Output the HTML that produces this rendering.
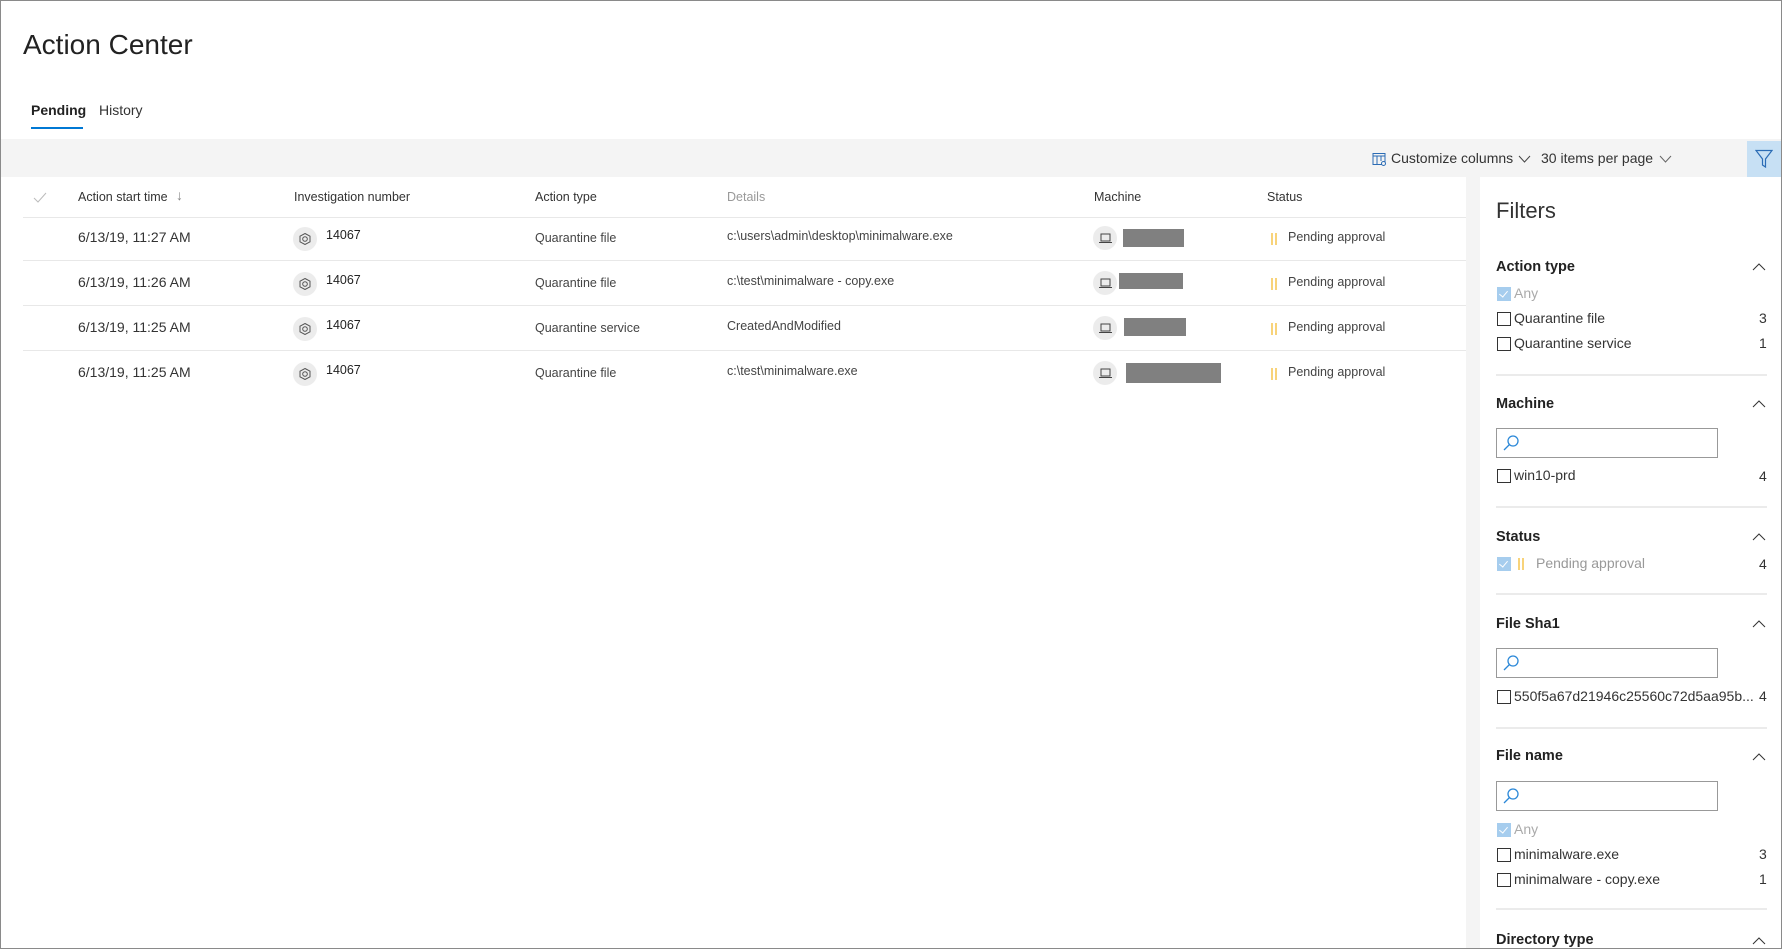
<!DOCTYPE html>
<html><head><meta charset="utf-8"><style>
*{box-sizing:border-box;margin:0;padding:0}
body{width:1782px;height:949px;overflow:hidden;background:#fff;font-family:"Segoe UI","Liberation Sans",sans-serif;color:#333;position:relative}
.frame{position:absolute;left:0;top:0;width:1782px;height:949px;border:1px solid #8a8a8a;z-index:10;pointer-events:none}
.a{position:absolute;white-space:nowrap}
.hd{font-size:12.5px;color:#333;top:190px}
.row{position:absolute;left:23px;width:1443px;height:1px;background:#e8e8e8}
.cell{font-size:12.5px;color:#444}
.date{font-size:14px;color:#333}
.ic{position:absolute;width:24px;height:24px;border-radius:50%;background:#ececec}
.red{position:absolute;background:#808080}
.bars{position:absolute;width:6px;height:12px;border-left:2px solid #f8d37a;border-right:2px solid #f8d37a}
.fh{font-size:14.5px;font-weight:bold;color:#222}
.fl{font-size:14px;color:#333}
.cb{position:absolute;width:14px;height:14px;border:1px solid #333;background:#fff}
.cbc{position:absolute;width:14px;height:14px;background:#a6cdee}
.cbc:after{content:"";position:absolute;left:4px;top:2px;width:4px;height:7px;border-right:1px solid #fff;border-bottom:1px solid #fff;transform:rotate(40deg)}
.cnt{font-size:14px;color:#333}
.div{position:absolute;left:1496px;width:271px;height:2px;background:#ebebeb}
.sb{position:absolute;left:1496px;width:222px;height:30px;border:1px solid #999;background:#fff}
.chev{position:absolute;left:1752px;width:14px;height:10px}
</style></head><body>
<div class="frame"></div>
<div class="a" style="left:23px;top:29px;font-size:28px;color:#222">Action Center</div>
<div class="a" style="left:31px;top:102px;font-size:14px;font-weight:bold;color:#222">Pending</div>
<div class="a" style="left:99px;top:102px;font-size:14px;color:#333">History</div>
<div style="position:absolute;left:31px;top:127px;width:52px;height:2px;background:#0078d4"></div>

<div style="position:absolute;left:1px;top:139px;width:1780px;height:38px;background:#f4f4f4"></div>
<svg style="position:absolute;left:1372px;top:152px" width="15" height="15" viewBox="0 0 15 15" fill="none" stroke="#2b6cb5" stroke-width="1"><rect x="1" y="1.5" width="12" height="11"/><line x1="1" y1="4" x2="13" y2="4"/><line x1="5" y1="4" x2="5" y2="12.5"/><line x1="9" y1="4" x2="9" y2="9"/><circle cx="11.5" cy="11.5" r="2" fill="#f4f4f4"/></svg>
<div class="a" style="left:1391px;top:150px;font-size:14px;color:#333">Customize columns</div>
<svg style="position:absolute;left:1518px;top:155px" width="13" height="8"><polyline points="1,1 6.5,7 12,1" fill="none" stroke="#444"/></svg>
<div class="a" style="left:1541px;top:150px;font-size:14px;color:#333">30 items per page</div>
<svg style="position:absolute;left:1659px;top:155px" width="13" height="8"><polyline points="1,1 6.5,7 12,1" fill="none" stroke="#666"/></svg>
<div style="position:absolute;left:1747px;top:141px;width:34px;height:36px;background:#c7e0f4"></div>
<svg style="position:absolute;left:1755px;top:149px" width="18" height="20" viewBox="0 0 18 20"><path d="M1 1.5 H17 L10.5 10 V18 L7.5 16 V10 Z" fill="none" stroke="#2b6cb5" stroke-width="1.2"/></svg>

<svg style="position:absolute;left:33px;top:192px" width="14" height="12"><polyline points="1,6 5,10 13,1" fill="none" stroke="#bbb"/></svg>
<div class="a hd" style="left:78px">Action start time</div>
<div class="a hd" style="left:176px;color:#888;font-size:14px;top:187px">↓</div>
<div class="a hd" style="left:294px">Investigation number</div>
<div class="a hd" style="left:535px">Action type</div>
<div class="a hd" style="left:727px;color:#999">Details</div>
<div class="a hd" style="left:1094px">Machine</div>
<div class="a hd" style="left:1267px">Status</div>
<div class="row" style="top:217px"></div>
<div class="row" style="top:260px"></div>
<div class="row" style="top:305px"></div>
<div class="row" style="top:350px"></div>

<div class="a date" style="left:78px;top:229px">6/13/19, 11:27 AM</div>
<div class="a date" style="left:78px;top:274px">6/13/19, 11:26 AM</div>
<div class="a date" style="left:78px;top:319px">6/13/19, 11:25 AM</div>
<div class="a date" style="left:78px;top:364px">6/13/19, 11:25 AM</div>

<div class="ic" style="left:293px;top:227px"></div>
<div class="ic" style="left:293px;top:272px"></div>
<div class="ic" style="left:293px;top:317px"></div>
<div class="ic" style="left:293px;top:362px"></div>
<svg style="position:absolute;left:299px;top:233px" width="12" height="12" viewBox="0 0 12 12"><path d="M6 0.5 L11 3.2 V8.8 L6 11.5 L1 8.8 V3.2 Z" fill="none" stroke="#555"/><circle cx="6" cy="6" r="2.3" fill="none" stroke="#555"/></svg>
<svg style="position:absolute;left:299px;top:278px" width="12" height="12" viewBox="0 0 12 12"><path d="M6 0.5 L11 3.2 V8.8 L6 11.5 L1 8.8 V3.2 Z" fill="none" stroke="#555"/><circle cx="6" cy="6" r="2.3" fill="none" stroke="#555"/></svg>
<svg style="position:absolute;left:299px;top:323px" width="12" height="12" viewBox="0 0 12 12"><path d="M6 0.5 L11 3.2 V8.8 L6 11.5 L1 8.8 V3.2 Z" fill="none" stroke="#555"/><circle cx="6" cy="6" r="2.3" fill="none" stroke="#555"/></svg>
<svg style="position:absolute;left:299px;top:368px" width="12" height="12" viewBox="0 0 12 12"><path d="M6 0.5 L11 3.2 V8.8 L6 11.5 L1 8.8 V3.2 Z" fill="none" stroke="#555"/><circle cx="6" cy="6" r="2.3" fill="none" stroke="#555"/></svg>
<div class="a cell" style="left:326px;top:228px;color:#222">14067</div>
<div class="a cell" style="left:326px;top:273px;color:#222">14067</div>
<div class="a cell" style="left:326px;top:318px;color:#222">14067</div>
<div class="a cell" style="left:326px;top:363px;color:#222">14067</div>

<div class="a cell" style="left:535px;top:231px">Quarantine file</div>
<div class="a cell" style="left:535px;top:276px">Quarantine file</div>
<div class="a cell" style="left:535px;top:321px">Quarantine service</div>
<div class="a cell" style="left:535px;top:366px">Quarantine file</div>

<div class="a cell" style="left:727px;top:229px">c:\users\admin\desktop\minimalware.exe</div>
<div class="a cell" style="left:727px;top:274px">c:\test\minimalware - copy.exe</div>
<div class="a cell" style="left:727px;top:319px">CreatedAndModified</div>
<div class="a cell" style="left:727px;top:364px">c:\test\minimalware.exe</div>

<div class="ic" style="left:1093px;top:226px"></div>
<div class="ic" style="left:1093px;top:271px"></div>
<div class="ic" style="left:1093px;top:316px"></div>
<div class="ic" style="left:1093px;top:361px"></div>
<svg style="position:absolute;left:1099px;top:233px" width="13" height="11"><rect x="2" y="1" width="9" height="7" fill="none" stroke="#444"/><line x1="0" y1="9.5" x2="13" y2="9.5" stroke="#444"/></svg>
<svg style="position:absolute;left:1099px;top:278px" width="13" height="11"><rect x="2" y="1" width="9" height="7" fill="none" stroke="#444"/><line x1="0" y1="9.5" x2="13" y2="9.5" stroke="#444"/></svg>
<svg style="position:absolute;left:1099px;top:323px" width="13" height="11"><rect x="2" y="1" width="9" height="7" fill="none" stroke="#444"/><line x1="0" y1="9.5" x2="13" y2="9.5" stroke="#444"/></svg>
<svg style="position:absolute;left:1099px;top:368px" width="13" height="11"><rect x="2" y="1" width="9" height="7" fill="none" stroke="#444"/><line x1="0" y1="9.5" x2="13" y2="9.5" stroke="#444"/></svg>
<div class="red" style="left:1123px;top:229px;width:61px;height:18px"></div>
<div class="red" style="left:1119px;top:273px;width:64px;height:16px"></div>
<div class="red" style="left:1124px;top:318px;width:62px;height:18px"></div>
<div class="red" style="left:1126px;top:363px;width:95px;height:20px"></div>

<div class="bars" style="left:1271px;top:233px"></div>
<div class="bars" style="left:1271px;top:278px"></div>
<div class="bars" style="left:1271px;top:323px"></div>
<div class="bars" style="left:1271px;top:368px"></div>
<div class="a cell" style="left:1288px;top:230px">Pending approval</div>
<div class="a cell" style="left:1288px;top:275px">Pending approval</div>
<div class="a cell" style="left:1288px;top:320px">Pending approval</div>
<div class="a cell" style="left:1288px;top:365px">Pending approval</div>

<div style="position:absolute;left:1466px;top:177px;width:14px;height:772px;background:#f4f4f4"></div>
<div class="a" style="left:1496px;top:198px;font-size:22px;color:#333">Filters</div>

<div class="a fh" style="left:1496px;top:259px">Action type</div>
<svg class="chev" style="top:262px"><polyline points="1,8 7,2 13,8" fill="none" stroke="#333"/></svg>
<div class="cbc" style="left:1497px;top:287px"></div>
<div class="a fl" style="left:1514px;top:285px;color:#aaa">Any</div>
<div class="cb" style="left:1497px;top:312px"></div>
<div class="a fl" style="left:1514px;top:310px">Quarantine file</div>
<div class="a cnt" style="left:1759px;top:310px">3</div>
<div class="cb" style="left:1497px;top:337px"></div>
<div class="a fl" style="left:1514px;top:335px">Quarantine service</div>
<div class="a cnt" style="left:1759px;top:335px">1</div>
<div class="div" style="top:374px"></div>

<div class="a fh" style="left:1496px;top:396px">Machine</div>
<svg class="chev" style="top:399px"><polyline points="1,8 7,2 13,8" fill="none" stroke="#333"/></svg>
<div class="sb" style="top:428px"></div>
<svg style="position:absolute;left:1502px;top:434px" width="18" height="18"><circle cx="11" cy="7" r="5" fill="none" stroke="#2b88d8" stroke-width="1.3"/><line x1="7.5" y1="10.5" x2="2" y2="16" stroke="#2b88d8" stroke-width="1.3"/></svg>
<div class="cb" style="left:1497px;top:469px"></div>
<div class="a fl" style="left:1514px;top:467px">win10-prd</div>
<div class="a cnt" style="left:1759px;top:468px">4</div>
<div class="div" style="top:506px"></div>

<div class="a fh" style="left:1496px;top:529px">Status</div>
<svg class="chev" style="top:532px"><polyline points="1,8 7,2 13,8" fill="none" stroke="#333"/></svg>
<div class="cbc" style="left:1497px;top:557px"></div>
<div class="bars" style="left:1518px;top:558px"></div>
<div class="a fl" style="left:1536px;top:555px;color:#999">Pending approval</div>
<div class="a cnt" style="left:1759px;top:556px">4</div>
<div class="div" style="top:593px"></div>

<div class="a fh" style="left:1496px;top:616px">File Sha1</div>
<svg class="chev" style="top:619px"><polyline points="1,8 7,2 13,8" fill="none" stroke="#333"/></svg>
<div class="sb" style="top:648px"></div>
<svg style="position:absolute;left:1502px;top:654px" width="18" height="18"><circle cx="11" cy="7" r="5" fill="none" stroke="#2b88d8" stroke-width="1.3"/><line x1="7.5" y1="10.5" x2="2" y2="16" stroke="#2b88d8" stroke-width="1.3"/></svg>
<div class="cb" style="left:1497px;top:690px"></div>
<div class="a fl" style="left:1514px;top:688px">550f5a67d21946c25560c72d5aa95b...</div>
<div class="a cnt" style="left:1759px;top:688px">4</div>
<div class="div" style="top:727px"></div>

<div class="a fh" style="left:1496px;top:748px">File name</div>
<svg class="chev" style="top:752px"><polyline points="1,8 7,2 13,8" fill="none" stroke="#333"/></svg>
<div class="sb" style="top:781px"></div>
<svg style="position:absolute;left:1502px;top:787px" width="18" height="18"><circle cx="11" cy="7" r="5" fill="none" stroke="#2b88d8" stroke-width="1.3"/><line x1="7.5" y1="10.5" x2="2" y2="16" stroke="#2b88d8" stroke-width="1.3"/></svg>
<div class="cbc" style="left:1497px;top:823px"></div>
<div class="a fl" style="left:1514px;top:821px;color:#aaa">Any</div>
<div class="cb" style="left:1497px;top:848px"></div>
<div class="a fl" style="left:1514px;top:846px">minimalware.exe</div>
<div class="a cnt" style="left:1759px;top:846px">3</div>
<div class="cb" style="left:1497px;top:873px"></div>
<div class="a fl" style="left:1514px;top:871px">minimalware - copy.exe</div>
<div class="a cnt" style="left:1759px;top:871px">1</div>
<div class="div" style="top:908px"></div>

<div class="a fh" style="left:1496px;top:932px">Directory type</div>
<svg class="chev" style="top:936px"><polyline points="1,8 7,2 13,8" fill="none" stroke="#333"/></svg>
</body></html>
